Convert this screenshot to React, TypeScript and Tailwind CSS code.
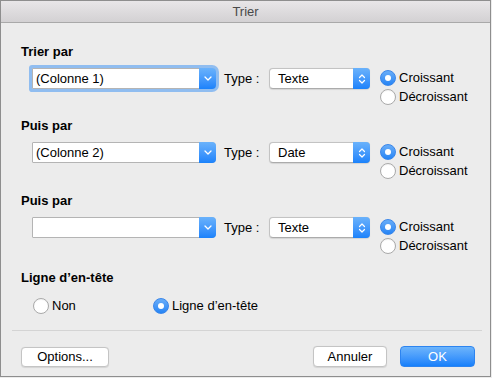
import React from "react";

function Chevron() {
  return (
    <svg width="8" height="5" viewBox="0 0 8 5">
      <path d="M1 1 L4 4 L7 1" stroke="white" strokeWidth="1.3" fill="none" strokeLinecap="round" strokeLinejoin="round" />
    </svg>
  );
}

function Stepper() {
  return (
    <svg width="8" height="12" viewBox="0 0 8 12">
      <path d="M1.5 4.5 L4 2 L6.5 4.5" stroke="white" strokeWidth="1.2" fill="none" strokeLinecap="round" strokeLinejoin="round" />
      <path d="M1.5 7.5 L4 10 L6.5 7.5" stroke="white" strokeWidth="1.2" fill="none" strokeLinecap="round" strokeLinejoin="round" />
    </svg>
  );
}

function Combo({ text, focused }: { text: string; focused?: boolean }) {
  return (
    <div
      className={
        "flex h-[21px] w-[184px] border border-[#b4b4b4] bg-white rounded-l-[1px] rounded-r-[4px] " +
        (focused ? "ring-[3px] ring-[#90bdf0]" : "")
      }
    >
      <div className="flex-1 pl-[3px] text-[13px] leading-[19px] text-black">{text}</div>
      <div className="-my-px -mr-px flex w-[17px] items-center justify-center rounded-r-[4px] bg-gradient-to-b from-[#6ab2fb] to-[#1a82fb]">
        <Chevron />
      </div>
    </div>
  );
}

function Popup({ text }: { text: string }) {
  return (
    <div className="flex h-[21px] w-[101px] rounded-[4px] border border-[#c3c3c3] border-b-[#ababab] bg-white shadow-[0_0.5px_1px_rgba(0,0,0,0.1)]">
      <div className="flex-1 pl-[8px] text-[13px] leading-[19px] text-black">{text}</div>
      <div className="-my-px -mr-px flex w-[17px] items-center justify-center rounded-r-[4px] bg-gradient-to-b from-[#6ab2fb] to-[#1a82fb]">
        <Stepper />
      </div>
    </div>
  );
}

function Radio({ checked }: { checked?: boolean }) {
  if (checked) {
    return (
      <div className="flex h-[16px] w-[16px] items-center justify-center rounded-full border border-[#3a86ea] bg-gradient-to-b from-[#68adf8] to-[#2384f5]">
        <div className="h-[6px] w-[6px] rounded-full bg-white" />
      </div>
    );
  }
  return (
    <div className="h-[16px] w-[16px] rounded-full border border-[#a9a9a9] bg-white shadow-[inset_0_1px_1px_rgba(0,0,0,0.05)]" />
  );
}

function SortRow({ label, text, type, focused, labelMt }: { label: string; text: string; type: string; focused?: boolean; labelMt: string }) {
  return (
    <div className={"flex flex-col " + labelMt}>
      <div className="ml-[20px] h-[16px] text-[13px] font-bold leading-[16px] text-black">{label}</div>
      <div className="mt-[8px] flex items-start">
        <div className="ml-[31px]">
          <Combo text={text} focused={focused} />
        </div>
        <div className="ml-[8px] w-[45px] text-[13px] leading-[21px] text-black">Type :</div>
        <Popup text={type} />
        <div className="ml-[10px] flex flex-col">
          <div className="flex h-[19px] items-center gap-[3px]">
            <Radio checked />
            <span className="text-[13px] leading-[16px] text-black">Croissant</span>
          </div>
          <div className="flex h-[20px] items-center gap-[3px]">
            <Radio />
            <span className="text-[13px] leading-[16px] text-black">Décroissant</span>
          </div>
        </div>
      </div>
    </div>
  );
}

export default function App() {
  return (
    <div className="h-[378px] w-[492px] bg-[#ececec] font-[family-name:Helvetica_Neue,Liberation_Sans,Arial,sans-serif]">
      <div className="flex h-[377px] w-[491px] flex-col border border-[#8e8e8e] bg-[#ececec]">
        <div className="h-[22px] border-b border-[#a9a9a9] bg-gradient-to-b from-[#e8e6e8] to-[#d3d1d3] text-center text-[13px] leading-[21px] text-[#4a4a4a]">
          Trier
        </div>
        <SortRow label="Trier par" text="(Colonne 1)" type="Texte" focused labelMt="mt-[21px]" />
        <SortRow label="Puis par" text="(Colonne 2)" type="Date" labelMt="mt-[11px]" />
        <SortRow label="Puis par" text="" type="Texte" labelMt="mt-[12px]" />
        <div className="ml-[20px] mt-[14px] h-[16px] text-[13px] font-bold leading-[16px] text-black">Ligne d’en-tête</div>
        <div className="ml-[32px] mt-[12px] flex h-[16px] items-center">
          <div className="flex w-[120px] items-center gap-[3px]">
            <Radio />
            <span className="text-[13px] leading-[16px] text-black">Non</span>
          </div>
          <div className="flex items-center gap-[3px]">
            <Radio checked />
            <span className="text-[13px] leading-[16px] text-black">Ligne d’en-tête</span>
          </div>
        </div>
        <div className="ml-[11px] mt-[16px] h-px w-[470px] bg-[#d4d4d4]" />
        <div className="mt-[15px] flex items-start px-[20px] pr-[15px]">
          <button className="mt-px h-[20px] w-[88px] rounded-[4px] border border-[#c4c4c4] bg-white text-[13px] leading-[18px] text-black shadow-[0_0.5px_1px_rgba(0,0,0,0.1)]">
            Options...
          </button>
          <div className="flex-1" />
          <button className="h-[21px] w-[74px] rounded-[4px] border border-[#c4c4c4] bg-white text-[13px] leading-[19px] text-black shadow-[0_0.5px_1px_rgba(0,0,0,0.1)]">
            Annuler
          </button>
          <button className="ml-[13px] h-[21px] w-[75px] rounded-[4px] border border-[#2d84f0] bg-gradient-to-b from-[#6cb4fb] to-[#1580fb] text-[13px] leading-[19px] text-white">
            OK
          </button>
        </div>
      </div>
    </div>
  );
}
